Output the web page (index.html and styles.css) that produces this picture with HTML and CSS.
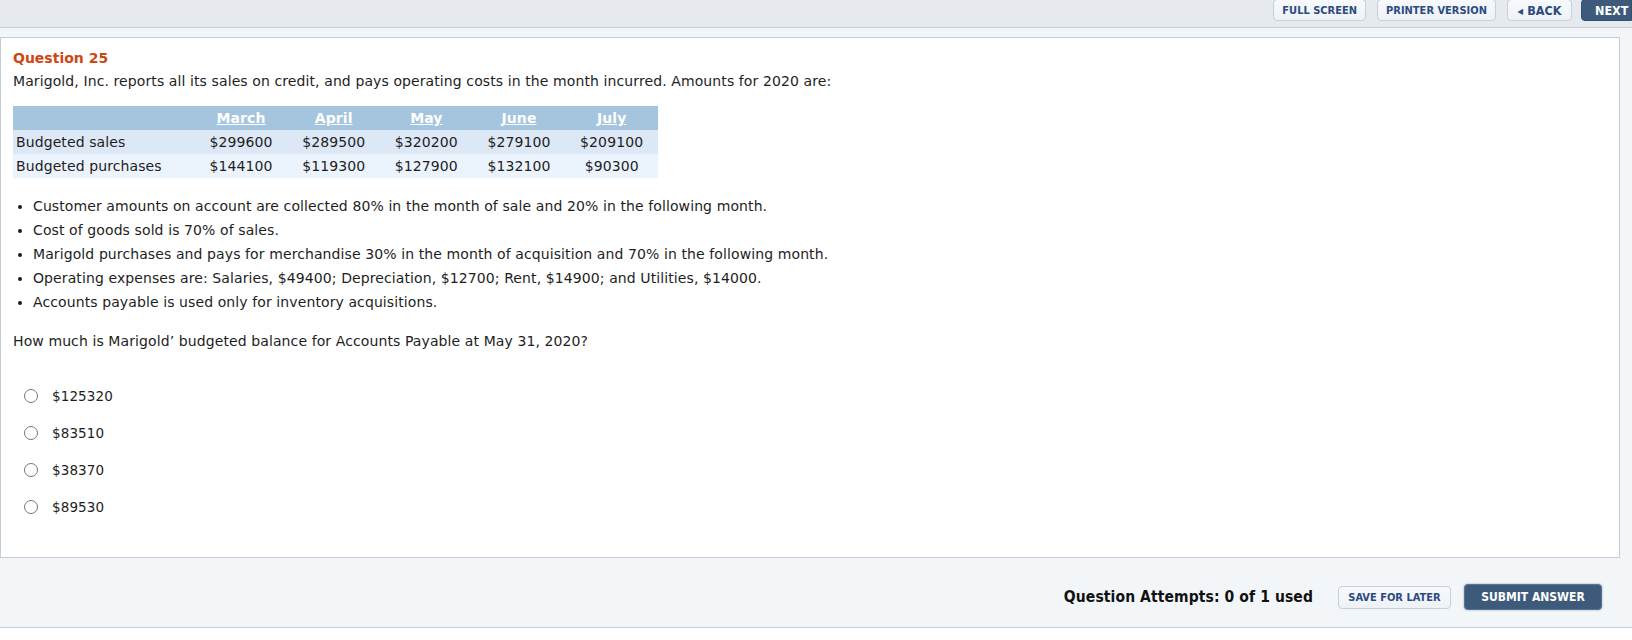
FILE: index.html
```html
<!DOCTYPE html>
<html lang="en">
<head>
  <meta charset="UTF-8" />
  <title>Question 25</title>
  <meta name="viewport" content="width=device-width, initial-scale=1.0" />
  <link rel="stylesheet" href="styles.css">
</head>
<body>
  <div class="topbar">
    <button class="tool-btn">FULL SCREEN</button>
    <button class="tool-btn">PRINTER VERSION</button>
    <button class="tool-btn nav-btn"><span class="arrow">&#9664;</span>BACK</button>
    <button class="tool-btn nav-btn next-btn">NEXT</button>
  </div>

  <div class="main">
    <div class="card">
      <div class="q-title">Question 25</div>
      <p class="q-intro">Marigold, Inc. reports all its sales on credit, and pays operating costs in the month incurred. Amounts for 2020 are:</p>

      <table class="budget">
        <thead>
          <tr><th class="label-col"></th><th>March</th><th>April</th><th>May</th><th>June</th><th>July</th></tr>
        </thead>
        <tbody>
          <tr class="row-a"><td class="label-col">Budgeted sales</td><td>$299600</td><td>$289500</td><td>$320200</td><td>$279100</td><td>$209100</td></tr>
          <tr class="row-b"><td class="label-col">Budgeted purchases</td><td>$144100</td><td>$119300</td><td>$127900</td><td>$132100</td><td>$90300</td></tr>
        </tbody>
      </table>

      <ul class="facts">
        <li>Customer amounts on account are collected 80% in the month of sale and 20% in the following month.</li>
        <li>Cost of goods sold is 70% of sales.</li>
        <li>Marigold purchases and pays for merchandise 30% in the month of acquisition and 70% in the following month.</li>
        <li>Operating expenses are: Salaries, $49400; Depreciation, $12700; Rent, $14900; and Utilities, $14000.</li>
        <li>Accounts payable is used only for inventory acquisitions.</li>
      </ul>

      <p class="q-ask">How much is Marigold’ budgeted balance for Accounts Payable at May 31, 2020?</p>

      <div class="options">
        <label class="option"><input type="radio" name="ans"><span>$125320</span></label>
        <label class="option"><input type="radio" name="ans"><span>$83510</span></label>
        <label class="option"><input type="radio" name="ans"><span>$38370</span></label>
        <label class="option"><input type="radio" name="ans"><span>$89530</span></label>
      </div>
    </div>
  </div>

  <div class="footer">
    <span class="attempts">Question Attempts: 0 of 1 used</span>
    <button class="tool-btn save-btn">SAVE FOR LATER</button>
    <button class="tool-btn submit-btn">SUBMIT ANSWER</button>
  </div>
</body>
</html>
```

FILE: styles.css
```css
body {
  margin: 0;
  background: #f3f6f9;
  font-family: "DejaVu Sans", Verdana, sans-serif;
  font-size: 14px;
  letter-spacing: 0.1px;
  color: #1e1e1e;
  height: 640px;
  overflow: hidden;
  position: relative;
}
.topbar {
  height: 27px;
  background: #e6eaef;
  border-bottom: 1px solid #c9cfd7;
  display: flex;
  justify-content: flex-end;
  align-items: flex-start;
  gap: 11px;
  overflow: hidden;
}
.tool-btn {
  font-family: "DejaVu Sans Condensed", "DejaVu Sans", sans-serif;
  font-stretch: condensed;
  font-weight: bold;
  font-size: 11px;
  letter-spacing: 0;
  color: #2c4a7e;
  background: linear-gradient(#f7f9fc, #eef2f7);
  border: 1px solid #c6cfda;
  border-radius: 4px;
  height: 22px;
  margin-top: -1px;
  padding: 0 8px;
  cursor: pointer;
}
.nav-btn {
  font-size: 12.5px;
  padding: 0 8px;
  width: 65px;
}
.arrow {
  font-size: 8px;
  margin-right: 4px;
  vertical-align: 1px;
}
.next-btn {
  margin-left: -2px;
  width: 51px;
  padding: 0 3px 0 13px;
  text-align: left;
  background: #3d5a7b;
  border-color: #34506f;
  color: #fff;
  border-radius: 4px 0 0 4px;
}
.main {
  padding: 9px 12px 0 0;
}
.card {
  background: #fff;
  border: 1px solid #c6ccd5;
  padding: 11px 12px 32px 12px;
}
.q-title {
  color: #cf4612;
  font-weight: bold;
  font-size: 14px;
  letter-spacing: 0;
  line-height: 18px;
  margin-bottom: 5px;
}
.q-intro {
  margin: 0;
  line-height: 18px;
}
.budget {
  margin-top: 16px;
  border-collapse: collapse;
  width: 645px;
}
.budget th, .budget td {
  height: 24px;
  padding: 0;
  text-align: center;
  width: 93px;
  line-height: 24px;
}
.budget th {
  background: #a5c4dd;
  color: #fff;
  font-weight: bold;
  text-decoration: underline;
}
.budget .label-col {
  width: 180px;
  text-align: left;
  padding-left: 3px;
}
.row-a {
  background: #dde8f7;
}
.row-b {
  background: #ebf3fd;
}
.facts {
  margin: 16px 0 0 0;
  padding-left: 20px;
  line-height: 24px;
}
.q-ask {
  margin: 18px 0 0 0;
  line-height: 18px;
}
.options {
  margin-top: 27px;
}
.option {
  display: flex;
  align-items: center;
  height: 37px;
}
.option input {
  appearance: none;
  width: 14px;
  height: 14px;
  border: 1px solid #777;
  border-radius: 50%;
  margin: 0 0 0 11px;
  background: #fff;
}
.option span {
  margin-left: 14px;
  font-size: 13.5px;
}
.footer {
  display: flex;
  justify-content: flex-end;
  align-items: center;
  padding: 26px 30px 18px 0;
  border-bottom: 1px solid #c9cfd7;
  position: absolute;
  left: 0;
  right: 0;
  top: 559px;
  height: 24px;
  background: #f3f6f9;
}
.attempts {
  font-family: "DejaVu Sans Condensed", "DejaVu Sans", sans-serif;
  font-stretch: condensed;
  font-weight: bold;
  font-size: 15.5px;
  color: #111;
  margin-right: 25px;
}
.save-btn {
  height: 23px;
  width: 113px;
  margin: 0 13px 0 0;
  padding: 0;
}
.submit-btn {
  height: 26px;
  width: 138px;
  margin: 0;
  padding: 0;
  font-size: 12px;
  background: #3d5a7b;
  border-color: #5a7593;
  color: #fff;
  box-shadow: 0 0 2px rgba(40, 60, 90, 0.5);
}
body::after {
  content: "";
  position: absolute;
  left: 0;
  right: 0;
  top: 628px;
  height: 12px;
  background: #fff;
}
```
